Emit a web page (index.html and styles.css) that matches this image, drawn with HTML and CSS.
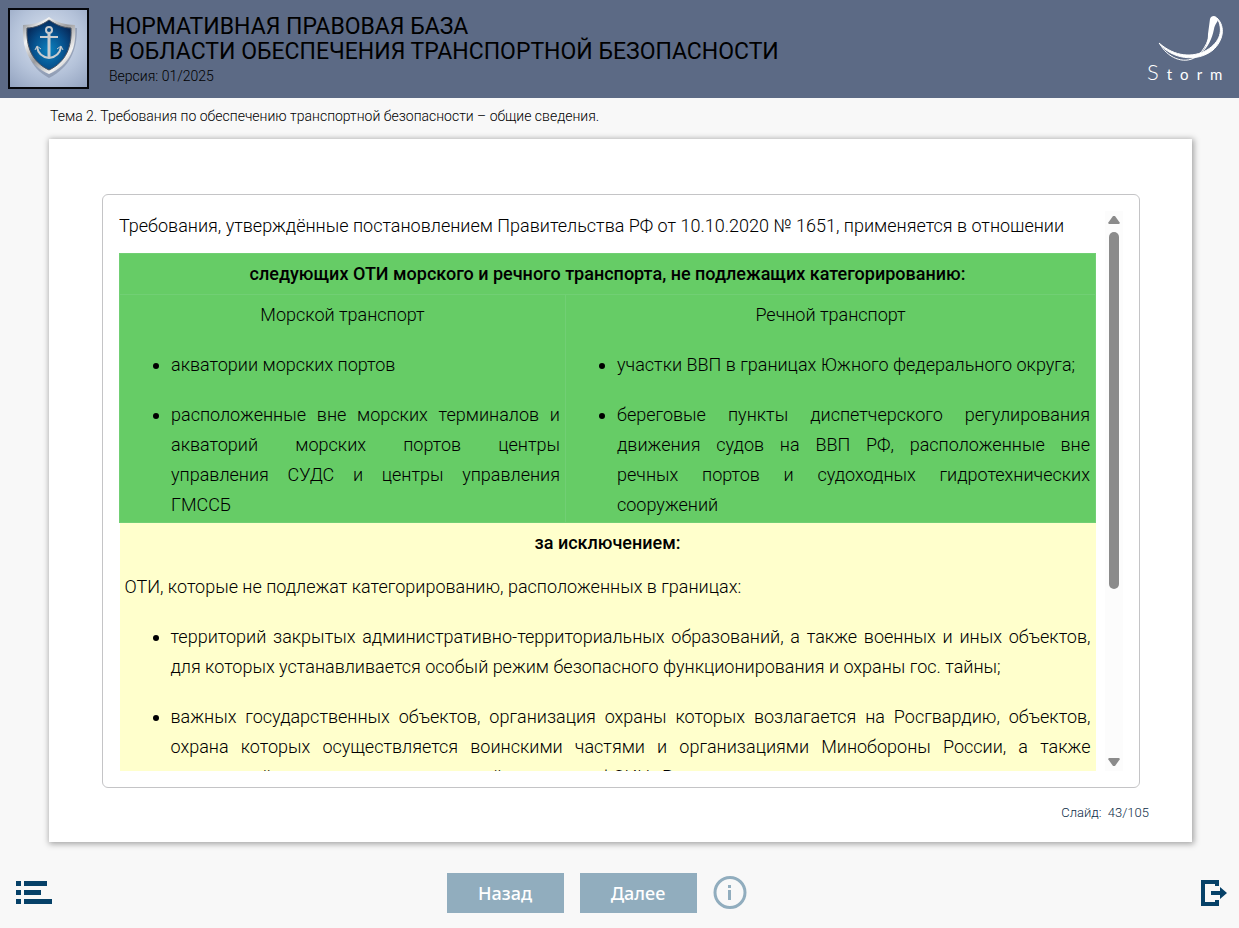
FILE: index.html
```html
<!DOCTYPE html>
<html lang="ru">
<head>
    <meta charset="UTF-8">
    <meta name="viewport" content="width=device-width, initial-scale=1.0">
    <title>Нормативная правовая база</title>
    <link rel="stylesheet" href="styles.css">
</head>
<body>
    <header class="header">
        <svg class="emblem" viewBox="0 0 81 81" role="img" aria-label="Щит с якорем">
            <defs>
                <radialGradient id="plate" cx="0.5" cy="0.4" r="0.75">
                    <stop offset="0" stop-color="#dde6f2"/>
                    <stop offset="0.6" stop-color="#b4c2d9"/>
                    <stop offset="1" stop-color="#94a4c0"/>
                </radialGradient>
                <linearGradient id="rim" x1="0" y1="0" x2="1" y2="1">
                    <stop offset="0" stop-color="#777b82"/>
                    <stop offset="0.25" stop-color="#f4f4f4"/>
                    <stop offset="0.5" stop-color="#9b9b9d"/>
                    <stop offset="0.75" stop-color="#f2f2f2"/>
                    <stop offset="1" stop-color="#777"/>
                </linearGradient>
                <radialGradient id="field" cx="0.5" cy="0.6" r="0.6">
                    <stop offset="0" stop-color="#0b83c0"/>
                    <stop offset="0.6" stop-color="#07508c"/>
                    <stop offset="1" stop-color="#062b5c"/>
                </radialGradient>
            </defs>
            <rect x="1" y="1" width="79" height="79" fill="url(#plate)" stroke="#05070c" stroke-width="2"/>
            <path d="M41 14C34 18 25 20 17 20C17 42 21 59 41 70C62 59 69 43 69 20C58 20 49 18 41 14Z" fill="#6f7c94" opacity="0.5"/>
            <path d="M41 9C34 14 24 17 15 17C14 40 20 57 41 66C62 57 69 40 67 17C58 17 48 14 41 9Z" fill="url(#rim)"/>
            <path d="M41 12C34 17 26 20 19 20C18 39 24 54 41 62C58 54 64 39 63 20C56 20 48 17 41 12Z" fill="url(#field)" stroke="#4b5461"/>
            <g fill="none" stroke="#c9cdd0" stroke-width="2">
                <circle cx="41" cy="22" r="3"/>
                <path d="M32 29H50"/>
                <path d="M41 25V49" stroke-width="3"/>
                <path d="M29 39C30 45 34 49 41 50C48 49 52 45 53 39"/>
                <path d="M27 42L29 38L33 41M49 41L53 38L55 42" stroke-width="1"/>
            </g>
        </svg>
        <div class="header-text">
            <h1>НОРМАТИВНАЯ ПРАВОВАЯ БАЗА<br>В ОБЛАСТИ ОБЕСПЕЧЕНИЯ ТРАНСПОРТНОЙ БЕЗОПАСНОСТИ</h1>
            <p>Версия: 01/2025</p>
        </div>
        <svg class="storm" viewBox="0 0 84 72" role="img" aria-label="Storm">
            <path d="M13 32C20 45 36 53 49 45C57 39 63 28 66 8" fill="none" stroke="#fff"/>
            <path d="M61 22L63 7C64 3 70 3 71 8C70 11 68 12 67 17C65 27 61 35 54 42C59 35 61 30 61 22Z" fill="#fff"/>
            <path d="M70 6C79 15 76 29 66 38C50 51 24 47 12 31C28 45 46 46 60 38C73 30 77 18 70 6Z" fill="#fff" stroke="#fff" stroke-linejoin="round"/>
            <text class="storm-name" y="68"><tspan class="storm-cap">S</tspan>torm</text>
        </svg>
    </header>

    <p class="topic">Тема 2. Требования по обеспечению транспортной безопасности – общие сведения.</p>

    <main class="slide">
        <div class="frame">
            <div class="content" id="content" tabindex="0">
                <p class="intro">Требования, утверждённые постановлением Правительства РФ от 10.10.2020 № 1651, применяется в отношении</p>
                <table>
                    <colgroup>
                        <col class="col-sea">
                        <col>
                    </colgroup>
                    <tbody class="green">
                        <tr>
                            <th colspan="2">следующих ОТИ морского и речного транспорта, не подлежащих категорированию:</th>
                        </tr>
                        <tr>
                            <td>
                                <p class="center">Морской транспорт</p>
                                <ul>
                                    <li>акватории морских портов</li>
                                    <li>расположенные вне морских терминалов и акваторий морских портов центры управления СУДС и центры управления ГМССБ</li>
                                </ul>
                            </td>
                            <td>
                                <p class="center">Речной транспорт</p>
                                <ul>
                                    <li>участки ВВП в границах Южного федерального округа;</li>
                                    <li>береговые пункты диспетчерского регулирования движения судов на ВВП РФ, расположенные вне речных&nbsp;портов и судоходных гидротехнических сооружений</li>
                                </ul>
                            </td>
                        </tr>
                    </tbody>
                    <tbody class="yellow">
                        <tr>
                            <th colspan="2">за исключением:</th>
                        </tr>
                        <tr>
                            <td colspan="2">
                                <p>ОТИ, которые не подлежат категорированию, расположенных в границах:</p>
                                <ul>
                                    <li>территорий закрытых административно-территориальных образований, а также военных и иных объектов, для которых устанавливается особый режим безопасного функционирования и охраны гос. тайны;</li>
                                    <li>важных государственных объектов, организация охраны которых возлагается на Росгвардию, объектов, охрана которых осуществляется воинскими частями и организациями Минобороны России, а также учреждений уголовно-исполнительной системы ФСИН России, места размещения которых указаны в соответствующем перечне.</li>
                                </ul>
                            </td>
                        </tr>
                    </tbody>
                </table>
            </div>
            <div class="scrollbar">
                <button type="button" id="scroll-up" aria-label="Прокрутить вверх"><svg viewBox="0 0 12 8"><path d="M5 0H7L12 7L11 8H1L0 7Z"/></svg></button>
                <div class="scroll-track"><div class="scroll-thumb"></div></div>
                <button type="button" id="scroll-down" aria-label="Прокрутить вниз"><svg viewBox="0 0 12 8"><path d="M5 8H7L12 1L11 0H1L0 1Z"/></svg></button>
            </div>
        </div>
        <p class="counter">Слайд:&nbsp; 43/105</p>
    </main>

    <footer class="footer">
        <button type="button" class="icon-button" aria-label="Содержание">
            <svg width="36" height="24" viewBox="0 0 36 24"><path d="M0 0H5V5H0ZM8 0H31V5H8ZM0 9H5V14H0ZM8 9H25V14H8ZM0 18H5V23H0ZM8 18H36V23H8Z" fill="#064168"/></svg>
        </button>
        <div class="nav">
            <button type="button" class="nav-button">Назад</button>
            <button type="button" class="nav-button">Далее</button>
            <button type="button" class="icon-button" aria-label="Информация">
                <svg width="34" height="34" viewBox="0 0 34 34"><circle cx="17" cy="16.5" r="15" fill="none" stroke="#91adbe" stroke-width="3"/><path d="M15 9H18V12H15ZM15 14H18V24H15Z" fill="#91adbe"/></svg>
            </button>
        </div>
        <button type="button" class="icon-button exit" aria-label="Выход">
            <svg width="26" height="26" viewBox="0 0 26 26"><path d="M16 6V2H2V24H16V20" fill="none" stroke="#064168" stroke-width="4"/><path d="M10 11H19V7L26 13L19 19V15H10Z" fill="#064168"/></svg>
        </button>
    </footer>

    <script>
        const content = document.getElementById('content');

        document.getElementById('scroll-up').addEventListener('click', () => content.scrollBy(0, -40));
        document.getElementById('scroll-down').addEventListener('click', () => content.scrollBy(0, 40));
    </script>
</body>
</html>
```
FILE: styles.css
```css
* {
    box-sizing: border-box;
}
body {
    display: flex;
    flex-direction: column;
    height: 100vh;
    margin: 0;
    background-color: #f8f8f8;
    color: #000;
    font-family: Roboto, "Liberation Sans", sans-serif;
    font-weight: 300;
}
h1, p {
    margin: 0;
}
button {
    padding: 0;
    border: none;
    background: none;
    cursor: pointer;
}
svg {
    display: block;
}
.header {
    display: flex;
    gap: 20px;
    padding: 8px 8px 9px;
    background-color: #5c6a85;
}
.emblem {
    width: 81px;
    height: 81px;
}
.header-text {
    flex: 1;
    padding-top: 6px;
}
.header-text h1 {
    font-size: 23px;
    font-weight: 400;
    line-height: 25px;
}
.header-text p {
    font-size: 14px;
    line-height: 24px;
}
.storm {
    width: 84px;
    height: 72px;
    margin-top: 4px;
}
.storm-name {
    fill: #fff;
    font-family: Lato, sans-serif;
    font-size: 15px;
    font-weight: 400;
    letter-spacing: 8px;
}
.storm-cap {
    font-size: 22px;
    font-weight: 300;
}
.topic {
    padding: 8px 50px 13px;
    font-size: 14px;
    line-height: 20px;
}
.slide {
    display: flex;
    flex: 1;
    flex-direction: column;
    min-height: 0;
    margin: 0 47px 0 49px;
    padding: 55px 43px 19px 53px;
    background: #fff;
    box-shadow: 1px 1px 6px 1px rgba(0, 0, 0, 0.35);
}
.frame {
    display: flex;
    flex: 1;
    gap: 9px;
    min-height: 0;
    margin-right: 9px;
    padding: 16px;
    border: 1px solid #c4c4c6;
    border-radius: 6px;
}
.content {
    flex: 1;
    overflow-y: auto;
    font-size: 18px;
    line-height: 30px;
    scrollbar-width: none;
}
.content .intro {
    margin-bottom: 12px;
}
table {
    width: 100%;
    border-collapse: collapse;
    table-layout: fixed;
}
.col-sea {
    width: 446px;
}
th, td {
    padding: 5px;
    text-align: justify;
    vertical-align: top;
}
th {
    font-weight: 500;
    text-align: center;
}
td .center {
    text-align: center;
}
.green {
    background-color: #66cc66;
}
.green th, .green td {
    border: 1px solid #71cf74;
}
.green td {
    padding-bottom: 2px;
}
.yellow {
    background-color: #ffffcc;
}
.yellow td {
    padding-top: 9px;
}
ul {
    margin: 20px 0 0;
    padding-left: 46px;
}
li + li {
    margin-top: 20px;
}
.scrollbar {
    display: flex;
    flex-direction: column;
    align-items: center;
    width: 18px;
    padding: 5px 0;
    background-color: #fcfcfc;
}
.scrollbar svg {
    width: 12px;
    height: 8px;
    fill: #8b8b8b;
}
.scroll-track {
    flex: 1;
    padding: 8px 0;
}
.scroll-thumb {
    width: 10px;
    height: 69%;
    border-radius: 5px;
    background-color: #8b8b8b;
}
.counter {
    padding-top: 15px;
    color: #0c2c48;
    font-size: 13px;
    line-height: 20px;
    text-align: right;
}
.footer {
    display: grid;
    grid-template-columns: 1fr auto 1fr;
    align-items: center;
    padding: 31px 12px 15px 16px;
}
.nav {
    display: flex;
    align-items: center;
    gap: 16px;
    padding-right: 50px;
}
.nav-button {
    width: 117px;
    height: 40px;
    background-color: #91adbe;
    color: #fff;
    font-family: "Noto Sans", sans-serif;
    font-size: 18px;
    font-weight: 500;
}
.icon-button {
    justify-self: start;
}
.exit {
    justify-self: end;
}
```
